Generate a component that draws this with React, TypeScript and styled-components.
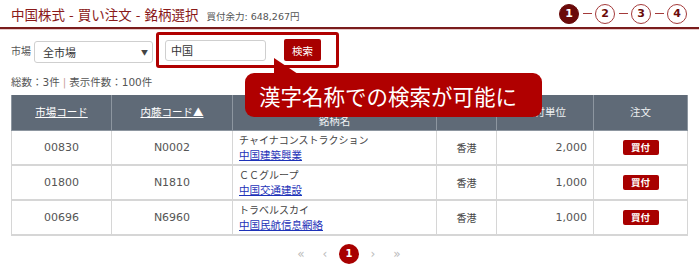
import React from "react";
import styled, { createGlobalStyle } from "styled-components";

const GlobalStyle = createGlobalStyle`
    body {
        margin: 0;
        background: #fff;
        font-family: "DejaVu Sans", "Noto Sans CJK JP", sans-serif;
        color: #555;
    }
`

const PageStyled = styled.div`
    position: relative;
    width: 699px;
    height: 268px;
    overflow: hidden;
`
const HeaderStyled = styled.header`
    display: flex;
    align-items: center;
    justify-content: space-between;
    height: 27px;
    padding: 0 12px 0 11px;
    border-bottom: 2px solid #7a1c1c;
    box-shadow: 0 1px 0 #e6c8c8;
`
const TitleWrapStyled = styled.div`
    display: flex;
    align-items: baseline;
    gap: 8px;
`
const TitleStyled = styled.h1`
    margin: 0;
    font-family: "Noto Sans CJK JP", sans-serif;
    font-size: 13.5px;
    font-weight: normal;
    color: #8a1a1a;
    word-spacing: 1px;
`
const BalanceStyled = styled.span`
    font-size: 9.5px;
    color: #555;
`
const StepperStyled = styled.ol`
    display: flex;
    align-items: center;
    margin: 0;
    padding: 0;
    list-style: none;
`
const StepStyled = styled.li<{ $active?: boolean }>`
    width: 20px;
    height: 20px;
    box-sizing: border-box;
    border-radius: 50%;
    border: 1.5px solid ${p => (p.$active ? "#6a0a0a" : "#a43a3a")};
    background: ${p => (p.$active ? "#6a0a0a" : "#fff")};
    color: ${p => (p.$active ? "#fff" : "#6a0a0a")};
    font-size: 11px;
    font-weight: bold;
    display: flex;
    align-items: center;
    justify-content: center;
`
const DashStyled = styled.li`
    width: 9px;
    height: 1px;
    margin: 0 3.5px;
    background: #a43a3a;
`
const SearchRowStyled = styled.div`
    display: flex;
    align-items: center;
    padding: 3px 0 0 11px;
    height: 36px;
`
const LabelStyled = styled.span`
    font-family: "Noto Sans CJK JP", sans-serif;
    font-size: 10px;
    color: #555;
    margin-right: 3px;
    margin-top: 1px;
`
const SelectStyled = styled.div`
    display: flex;
    align-items: center;
    justify-content: space-between;
    box-sizing: border-box;
    width: 119px;
    height: 22px;
    margin-top: 3px;
    padding: 0 4px 0 8px;
    border: 1px solid #cfcfcf;
    border-radius: 3px;
    font-family: "Noto Sans CJK JP", sans-serif;
    font-size: 11px;
    color: #333;
    span:last-child {
        font-size: 7px;
        color: #444;
    }
`
const HighlightStyled = styled.div`
    display: flex;
    align-items: center;
    box-sizing: border-box;
    width: 183px;
    height: 36px;
    margin-left: 3px;
    padding: 0 15px 0 6px;
    border: 3px solid #b00000;
    border-radius: 3px;
    justify-content: space-between;
`
const InputStyled = styled.div`
    box-sizing: border-box;
    width: 101px;
    height: 21px;
    padding: 0 5px;
    border: 1px solid #cfcfcf;
    border-radius: 3px;
    display: flex;
    align-items: center;
    font-family: "Noto Sans CJK JP", sans-serif;
    font-size: 11px;
    color: #333;
`
const SearchButtonStyled = styled.button`
    width: 37px;
    height: 22px;
    padding: 0;
    border: none;
    border-radius: 2px;
    background: #a80000;
    color: #fff;
    font-family: "Noto Sans CJK JP", sans-serif;
    font-size: 10.5px;
`
const SummaryStyled = styled.div`
    padding: 6px 0 0 11px;
    height: 21px;
    font-family: "DejaVu Sans", "Noto Sans CJK JP", sans-serif;
    font-size: 10.5px;
    color: #555;
    span {
        color: #c9a0a0;
        margin: 0 3px;
    }
`
const TableStyled = styled.table`
    margin-left: 11px;
    width: 676px;
    border-collapse: collapse;
    table-layout: fixed;
`
const ThStyled = styled.th<{ $w: number; $pad?: string; $valign?: string }>`
    width: ${p => p.$w}px;
    height: 35px;
    box-sizing: border-box;
    padding: ${p => p.$pad || "0"};
    vertical-align: ${p => p.$valign || "middle"};
    background: #5f6a77;
    border: 1px solid #8d96a0;
    border-top: none;
    color: #eef0f2;
    font-family: "Noto Sans CJK JP", sans-serif;
    font-size: 10.5px;
    font-weight: normal;
    line-height: 14px;
    a {
        color: #fff;
        text-decoration: underline;
    }
`
const TdStyled = styled.td<{ $align?: string }>`
    height: 33px;
    padding: 0 6px;
    border: 1px solid #d6d6d6;
    border-bottom-width: 2px;
    text-align: ${p => p.$align || "center"};
    font-size: 11px;
    color: #555;
`
const KanaStyled = styled.div`
    font-family: "Noto Sans CJK JP", sans-serif;
    font-size: 10px;
    color: #444;
    line-height: 15px;
`
const NameLinkStyled = styled.a`
    display: block;
    font-family: "Noto Sans CJK JP", sans-serif;
    font-size: 10.5px;
    line-height: 15px;
    color: #1d32b8;
    text-decoration: underline;
`
const BuyButtonStyled = styled.button`
    width: 36px;
    height: 15px;
    padding: 0;
    border: none;
    border-radius: 2px;
    background: #a80000;
    color: #fff;
    font-family: "Noto Sans CJK JP", sans-serif;
    font-size: 9.5px;
    font-weight: bold;
    line-height: 15px;
`
const PagerStyled = styled.nav`
    display: flex;
    justify-content: center;
    gap: 4px;
    width: 676px;
    margin: 8px 0 0 11px;
`
const PageItemStyled = styled.span<{ $current?: boolean }>`
    width: 20px;
    height: 20px;
    border-radius: 50%;
    display: flex;
    align-items: center;
    justify-content: center;
    background: ${p => (p.$current ? "#a80000" : "transparent")};
    color: ${p => (p.$current ? "#fff" : "#bbb")};
    font-size: ${p => (p.$current ? "10px" : "12px")};
    font-weight: ${p => (p.$current ? "bold" : "normal")};
`
const CalloutStyled = styled.div`
    position: absolute;
    left: 245px;
    top: 73px;
    width: 297px;
    height: 44px;
    box-sizing: border-box;
    padding-left: 14px;
    border-radius: 9px;
    background: #b00000;
    color: #fff;
    font-family: "Noto Sans CJK JP", sans-serif;
    font-size: 21.5px;
    display: flex;
    align-items: center;
    &::before {
        content: "";
        position: absolute;
        left: 29px;
        top: -15px;
        width: 27px;
        height: 18px;
        background: #b00000;
        clip-path: polygon(0 0, 0 100%, 100% 100%);
    }
`

const stocks = [
    { market: "00830", code: "N0002", kana: "チャイナコンストラクション", name: "中国建築興業", unit: "2,000" },
    { market: "01800", code: "N1810", kana: "ＣＣグループ", name: "中国交通建設", unit: "1,000" },
    { market: "00696", code: "N6960", kana: "トラベルスカイ", name: "中国民航信息網絡", unit: "1,000" },
]

const App: React.FC = () => {
    return (
        <PageStyled>
            <GlobalStyle />
            <HeaderStyled>
                <TitleWrapStyled>
                    <TitleStyled>中国株式 - 買い注文 - 銘柄選択</TitleStyled>
                    <BalanceStyled>買付余力: 648,267円</BalanceStyled>
                </TitleWrapStyled>
                <StepperStyled>
                    <StepStyled $active>1</StepStyled>
                    <DashStyled />
                    <StepStyled>2</StepStyled>
                    <DashStyled />
                    <StepStyled>3</StepStyled>
                    <DashStyled />
                    <StepStyled>4</StepStyled>
                </StepperStyled>
            </HeaderStyled>

            <SearchRowStyled>
                <LabelStyled>市場</LabelStyled>
                <SelectStyled>
                    <span>全市場</span>
                    <span>▼</span>
                </SelectStyled>
                <HighlightStyled>
                    <InputStyled>中国</InputStyled>
                    <SearchButtonStyled>検索</SearchButtonStyled>
                </HighlightStyled>
            </SearchRowStyled>

            <SummaryStyled>
                総数：3件<span>|</span>表示件数：100件
            </SummaryStyled>

            <TableStyled>
                <thead>
                    <tr>
                        <ThStyled $w={100}><a>市場コード</a></ThStyled>
                        <ThStyled $w={121}><a>内藤コード▲</a></ThStyled>
                        <ThStyled $w={204} $pad="4px 0 0">銘柄名（カナ）<br />銘柄名</ThStyled>
                        <ThStyled $w={60} $pad="6px 0 0" $valign="top">市場</ThStyled>
                        <ThStyled $w={97}>買付単位</ThStyled>
                        <ThStyled $w={94}>注文</ThStyled>
                    </tr>
                </thead>
                <tbody>
                    {stocks.map(s => (
                        <tr key={s.market}>
                            <TdStyled>{s.market}</TdStyled>
                            <TdStyled>{s.code}</TdStyled>
                            <TdStyled $align="left">
                                <KanaStyled>{s.kana}</KanaStyled>
                                <NameLinkStyled>{s.name}</NameLinkStyled>
                            </TdStyled>
                            <TdStyled><KanaStyled>香港</KanaStyled></TdStyled>
                            <TdStyled $align="right">{s.unit}</TdStyled>
                            <TdStyled><BuyButtonStyled>買付</BuyButtonStyled></TdStyled>
                        </tr>
                    ))}
                </tbody>
            </TableStyled>

            <PagerStyled>
                <PageItemStyled>«</PageItemStyled>
                <PageItemStyled>‹</PageItemStyled>
                <PageItemStyled $current>1</PageItemStyled>
                <PageItemStyled>›</PageItemStyled>
                <PageItemStyled>»</PageItemStyled>
            </PagerStyled>

            <CalloutStyled>漢字名称での検索が可能に</CalloutStyled>
        </PageStyled>
    )
}

export default App;
